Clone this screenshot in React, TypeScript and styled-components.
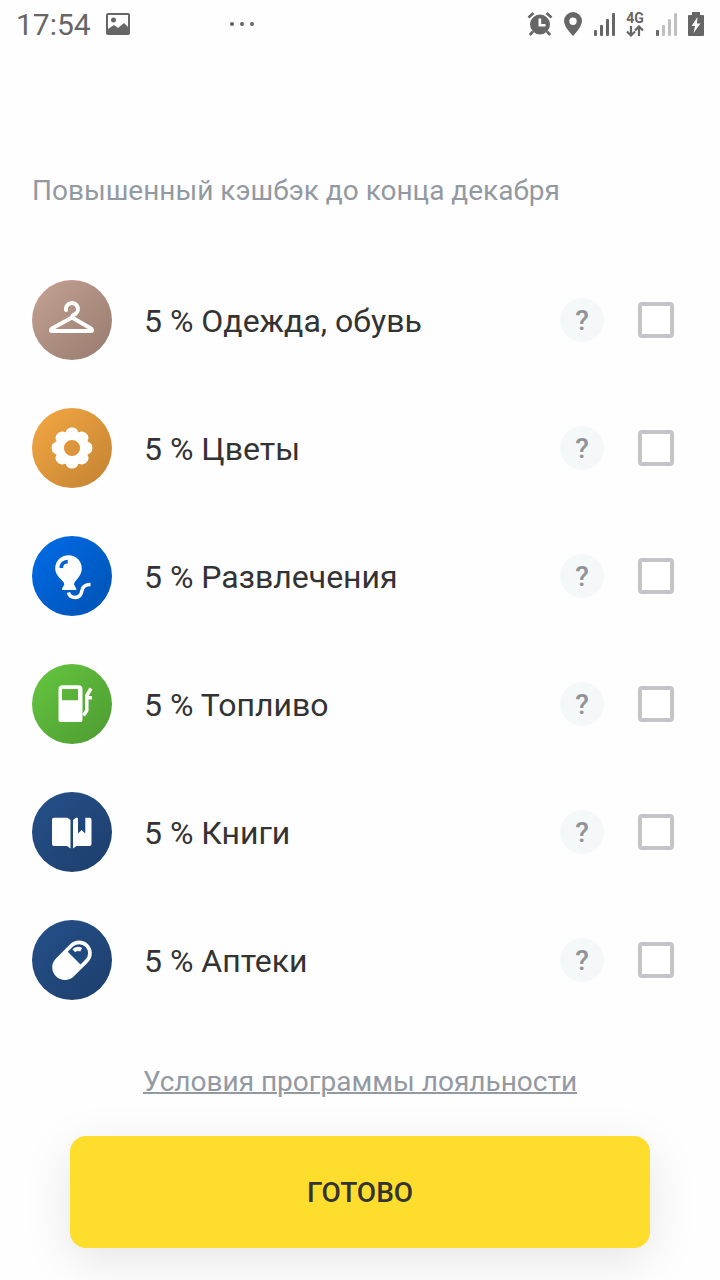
import React from 'react';
import styled, { createGlobalStyle } from 'styled-components';

const GlobalStyle = createGlobalStyle`
  *, *::before, *::after { box-sizing: border-box; }
  body {
    margin: 0;
    background: #fefefe;
    color: #333;
    font-family: Roboto, "Noto Sans", sans-serif;
  }
`;

const Screen = styled.div`
  display: flex;
  flex-direction: column;
  min-height: 100vh;
  overflow: hidden;
`;

const StatusBar = styled.header`
  display: flex;
  align-items: center;
  height: 48px;
  padding: 0 15px 0 16px;
  color: #666;
  fill: currentColor;
`;

const Clock = styled.time`
  margin-right: 15px;
  padding-top: 2px;
  font-size: 30px;
  line-height: 48px;
`;

const More = styled.svg`
  margin-left: 98px;
`;

const StatusIcons = styled.div`
  display: flex;
  align-items: center;
  gap: 10px;
  margin-left: auto;
`;

const Network = styled.div`
  display: flex;
  flex-direction: column;
  align-items: center;
  width: 20px;
  font-size: 14px;
  font-weight: 700;
  line-height: 14px;
`;

const Main = styled.main`
  display: flex;
  flex-direction: column;
  flex: 1;
  padding: 127px 46px 32px 32px;
`;

const Title = styled.h1`
  margin: 0 0 57px;
  color: #9299a2;
  font-size: 28px;
  font-weight: 400;
  line-height: 32px;
`;

const Categories = styled.ul`
  display: flex;
  flex-direction: column;
  gap: 48px;
  margin: 16px 0 0;
  padding: 0;
  list-style: none;
`;

const Category = styled.li`
  display: flex;
  align-items: center;
`;

const Badge = styled.span<{ $from: string; $to: string }>`
  flex: none;
  width: 80px;
  height: 80px;
  border-radius: 50%;
  background: linear-gradient(135deg, ${(p) => p.$from}, ${(p) => p.$to});
`;

const Label = styled.label`
  flex: 1;
  padding: 2px 0 0 32px;
  font-size: 32px;
  line-height: 40px;
`;

const Help = styled.button`
  flex: none;
  width: 44px;
  height: 44px;
  margin-right: 34px;
  padding: 2px 0 0;
  border: 0;
  border-radius: 50%;
  background: #f5f8f8;
  color: #8f9499;
  font: 500 28px/42px Roboto, sans-serif;
`;

const Checkbox = styled.input`
  appearance: none;
  flex: none;
  width: 36px;
  height: 36px;
  margin: 0;
  border: 4px solid #c4c5c9;
  border-radius: 4px;
  background: #fff;

  &:checked { background: #ffdd2d; }
`;

const Footer = styled.footer`
  display: flex;
  flex-direction: column;
  align-items: center;
  gap: 38px;
  margin-top: auto;
  padding: 0 24px 0 38px;
`;

const Terms = styled.a`
  color: #9299a2;
  font-size: 28px;
  line-height: 32px;
  text-decoration: underline;
  text-decoration-thickness: 2px;
`;

const Done = styled.button`
  align-self: stretch;
  height: 112px;
  padding: 2px 0 0;
  border: 0;
  border-radius: 16px;
  background: #ffdd2d;
  box-shadow: 0 12px 48px rgba(0, 0, 0, 0.1);
  color: #333;
  font: 500 28px/32px Roboto, sans-serif;
`;

const line = {
  fill: 'none',
  stroke: '#fff',
  strokeLinecap: 'round',
  strokeLinejoin: 'round',
} as const;

const Hanger = () => (
  <g {...line} strokeWidth="4">
    <path d="M34 30a6 6 0 1 1 9.500 3.800Q40 35 40 38" />
    <path d="M40 37.500 20 48.500Q17.500 51 20.500 51H58.500Q61.500 51 59 48.500Z" />
  </g>
);

const Flower = () => (
  <path
    fill="#fff"
    fillRule="evenodd"
    transform="translate(40 40) scale(1.050) translate(-40 -40)"
    d="M33.900 25.300a6.300 6.300 0 0 1 12.200 0a6.300 6.300 0 0 1 8.600 8.600a6.300 6.300 0 0 1 0 12.200a6.300 6.300 0 0 1-8.600 8.600a6.300 6.300 0 0 1-12.200 0a6.300 6.300 0 0 1-8.600-8.600a6.300 6.300 0 0 1 0-12.200a6.300 6.300 0 0 1 8.600-8.600ZM40 32.300a7.700 7.700 0 1 0 0 15.400a7.700 7.700 0 1 0 0-15.400Z"
  />
);

const Balloon = () => (
  <>
    <path fill="#fff" d="M36.500 19.300C44 19.300 49.800 25 49.800 32.500c0 6-4 9.500-7.300 14l-.5 2 2.300 4.300q.5 1.200-.8 1.200H30.800q-1.300 0-.8-1.200l2.300-4.300-.5-2C28 42 23.200 38.500 23.200 32.500C23.200 25 29 19.300 36.500 19.300Z" />
    <path d="M29.300 32q0-6 6.500-6.500" fill="none" stroke="#0062d2" strokeWidth="3.600" />
    <path {...line} strokeLinecap="butt" strokeWidth="3.600" d="M36.300 56.500Q38 61.500 43 61.500C48 61.500 49.500 58 50 54.500Q51 48.500 58.500 48.500" />
  </>
);

const Fuel = () => (
  <>
    <path fill="#fff" fillRule="evenodd" d="M30.500 21.300h16q4 0 4 4V56q0 2-2 2h-20q-2 0-2-2V25.300q0-4 4-4ZM30 25v11.300h16V25Z" />
    <path {...line} strokeLinecap="butt" strokeWidth="3.500" d="M59 24.500 54.800 31.500V46.500L51.500 51.500M54.500 33.800H60" />
  </>
);

const Book = () => (
  <path
    fill="#fff"
    d="M22 25.700H35.500L38.500 28V56.500L35 54H22q-2 0-2-2V27.700q0-2 2-2ZM41 28l3-2.300h2V41.500L49.600 38l3.700 3.500V25.700H57.500q2 0 2 2V52q0 2-2 2H44.500L41 56.500Z"
  />
);

const Pill = () => (
  <g transform="translate(40 40.300) rotate(45)">
    <rect x="-12.700" y="-22.700" width="25.400" height="45.400" rx="12.700" fill="#fff" />
    <path fill="#214a80" d="M-9 -3V-10a9 9 0 0 1 18 0V-3Z" />
    <path fill="none" stroke="#fff" strokeWidth="4" d="M-5.500 -8Q-5.500 -12.500 -1 -14" />
  </g>
);

const categories = [
  { id: 'clothes', name: 'Одежда, обувь', from: '#c4a293', to: '#967b6e', Icon: Hanger },
  { id: 'flowers', name: 'Цветы', from: '#f5a843', to: '#c28232', Icon: Flower },
  { id: 'fun', name: 'Развлечения', from: '#006ce8', to: '#0052b2', Icon: Balloon },
  { id: 'fuel', name: 'Топливо', from: '#65c73f', to: '#4d9a31', Icon: Fuel },
  { id: 'books', name: 'Книги', from: '#25508a', to: '#1d3e6b', Icon: Book },
  { id: 'pharmacy', name: 'Аптеки', from: '#25508a', to: '#1d3e6b', Icon: Pill },
];

const Signal = ({ weak = false }: { weak?: boolean }) => (
  <svg width="22" height="24" viewBox="-1 0 22 24" aria-hidden="true">
    <rect x="0" y="18" width="3" height="6" rx="1" />
    <g opacity={weak ? 0.4 : 1}>
      <rect x="6" y="13" width="3" height="11" rx="1" />
      <rect x="12" y="7" width="3" height="17" rx="1" />
      <rect x="18" y="1" width="3" height="23" rx="1" />
    </g>
  </svg>
);

export default function App() {
  return (
    <Screen>
      <GlobalStyle />
      <StatusBar>
        <Clock>17:54</Clock>
        <svg width="24" height="22" viewBox="0 0 24 22" aria-hidden="true">
          <path fillRule="evenodd" d="M2 0H22q2 0 2 2V20q0 2-2 2H2q-2 0-2-2V2Q0 0 2 0ZM2 2V16L8 12l4 3 6-5 4 4V2ZM7.500 4.500a2.500 2.500 0 1 1 0 5a2.500 2.500 0 1 1 0-5Z" />
        </svg>
        <More width="28" height="6" viewBox="0 0 28 6" aria-hidden="true">
          <circle cx="4" cy="3" r="2" />
          <circle cx="14" cy="3" r="2" />
          <circle cx="24" cy="3" r="2" />
        </More>
        <StatusIcons>
          <svg width="26" height="24" viewBox="0 0 26 24" aria-hidden="true">
            <path fillRule="evenodd" d="M13 2.500a10 10 0 1 1 0 20a10 10 0 1 1 0-20ZM11.500 6.500V14.500H18.500V12H14.200V6.500Z" />
            <path d="M1.500 5.500 6.500 1M24.500 5.500 19.500 1M6 19.500 2.800 23M20 19.500 23.200 23" fill="none" stroke="currentColor" strokeWidth="2.600" />
          </svg>
          <svg width="20" height="24" viewBox="0 0 20 24" aria-hidden="true">
            <path fillRule="evenodd" d="M10 0a9 9 0 0 1 9 9C19 15 10 24 10 24S1 15 1 9A9 9 0 0 1 10 0ZM10 5.500a3.700 3.700 0 1 0 0 7.400a3.700 3.700 0 1 0 0-7.400Z" />
          </svg>
          <Signal />
          <Network>
            4G
            <svg width="18" height="12" viewBox="0 0 18 12" fill="none" stroke="currentColor" strokeWidth="2.200" aria-hidden="true">
              <path d="M5 1V10M1 6.500 5 10.500 9 6.500M13 11V2M9 5.500 13 1.500 17 5.500" />
            </svg>
          </Network>
          <Signal weak />
          <svg width="18" height="24" viewBox="0 0 18 24" aria-hidden="true">
            <path fillRule="evenodd" d="M5 0H13V3H16q1 0 1 1V23q0 1-1 1H2q-1 0-1-1V4q0-1 1-1H5ZM10.500 5 4.500 14H8L6.500 21 13.500 11.500H10Z" />
          </svg>
        </StatusIcons>
      </StatusBar>
      <Main>
        <Title>Повышенный кэшбэк до конца декабря</Title>
        <Categories>
          {categories.map(({ id, name, from, to, Icon }) => (
            <Category key={id}>
              <Badge $from={from} $to={to}>
                <svg width="80" height="80" viewBox="0 0 80 80" aria-hidden="true">
                  <Icon />
                </svg>
              </Badge>
              <Label htmlFor={id}>5 % {name}</Label>
              <Help type="button" aria-label={`Подробнее: ${name}`}>?</Help>
              <Checkbox type="checkbox" id={id} />
            </Category>
          ))}
        </Categories>
        <Footer>
          <Terms href="#terms">Условия программы лояльности</Terms>
          <Done type="button">ГОТОВО</Done>
        </Footer>
      </Main>
    </Screen>
  );
}
